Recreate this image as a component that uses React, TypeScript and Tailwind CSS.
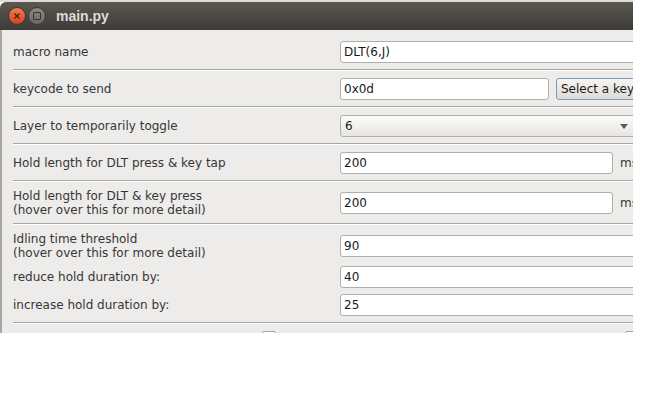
const font = "font-['DejaVu_Sans',sans-serif] text-[12px] text-[#363636]";

function Field({ value, w }: { value: string; w: string }) {
  return (
    <div
      className={`${w} h-[22px] shrink-0 rounded-[3px] border border-[#b2afaa] bg-white pl-[3px] flex items-center text-[#1a1a1a]`}
    >
      {value}
    </div>
  );
}

function Sep() {
  return <div className="ml-[11px] h-px bg-[#a8a6a1] border-b border-white box-content" />;
}

function Row({ label, children, h = "h-[22px]", className = "" }: { label: React.ReactNode; children: React.ReactNode; h?: string; className?: string }) {
  return (
    <div className={`flex items-center ${h} ${className}`}>
      <div className="w-[338px] shrink-0 pl-[11px] leading-[14px]">{label}</div>
      <div className="flex items-center gap-[7px]">{children}</div>
    </div>
  );
}

export default function App() {
  return (
    <div className="w-[662px] h-[400px] bg-white relative overflow-hidden">
      <div className={`w-[633px] h-[333px] flex flex-col overflow-hidden ${font}`}>
        <div className="h-[2px] bg-[#dedcd8] shrink-0" />
        <div className="h-[28px] shrink-0 flex items-center bg-gradient-to-b from-[#5b5852] to-[#3c3b37] rounded-tl-[6px]">
          <div className="ml-[8px] w-[18px] h-[18px] rounded-full bg-gradient-to-b from-[#f37a4e] to-[#d9411c] border border-[#3a3936] flex items-center justify-center">
            <svg width="8" height="8" viewBox="0 0 8 8">
              <path d="M1.5 1.5 L6.5 6.5 M6.5 1.5 L1.5 6.5" stroke="#4a2316" strokeWidth="1.4" />
            </svg>
          </div>
          <div className="ml-[2px] w-[18px] h-[18px] rounded-full bg-gradient-to-b from-[#8a8883] to-[#6a6964] border border-[#3a3936] flex items-center justify-center">
            <div className="w-[8px] h-[8px] border border-[#35342f] rounded-[1px]" />
          </div>
          <span className="ml-[10px] font-['Liberation_Sans',sans-serif] font-bold text-[14px] text-[#dfdbd2]">main.py</span>
        </div>
        <div className="flex-1 flex bg-[#edecea]">
          <div className="w-[2px] bg-[#a9a7a3] shrink-0" />
          <div className="flex-1 flex flex-col pt-[11px]">
            <Row label="macro name">
              <Field value="DLT(6,J)" w="w-[320px]" />
            </Row>
            <div className="mt-[6px]"><Sep /></div>
            <Row label="keycode to send" className="mt-[7px]">
              <Field value="0x0d" w="w-[209px]" />
              <div className="h-[22px] w-[100px] shrink-0 rounded-[3px] border border-[#7a9cc0] bg-gradient-to-b from-[#f6f5f3] to-[#dedbd6] pl-[4px] flex items-center text-[#1a1a1a]">
                Select a key
              </div>
            </Row>
            <div className="mt-[6px]"><Sep /></div>
            <Row label="Layer to temporarily toggle" className="mt-[7px]">
              <div className="w-[320px] h-[22px] shrink-0 rounded-[3px] border border-[#b2afaa] bg-gradient-to-b from-[#fbfbfa] to-[#e7e5e2] pl-[4px] flex items-center text-[#1a1a1a]">
                <span className="flex-1">6</span>
                <svg width="8" height="5" viewBox="0 0 8 5" className="mr-[31px]">
                  <path d="M0 0 H8 L4 5 Z" fill="#5a5a5a" />
                </svg>
              </div>
            </Row>
            <div className="mt-[6px]"><Sep /></div>
            <Row label="Hold length for DLT press & key tap" className="mt-[7px]">
              <Field value="200" w="w-[273px]" />
              <span>ms</span>
            </Row>
            <div className="mt-[6px]"><Sep /></div>
            <Row
              label={<>Hold length for DLT &amp; key press<br />(hover over this for more detail)</>}
              h="h-[28px]"
              className="mt-[7px]"
            >
              <Field value="200" w="w-[273px]" />
              <span>ms</span>
            </Row>
            <div className="mt-[6px]"><Sep /></div>
            <Row
              label={<>Idling time threshold<br />(hover over this for more detail)</>}
              h="h-[28px]"
              className="mt-[7px]"
            >
              <Field value="90" w="w-[320px]" />
            </Row>
            <Row label="reduce hold duration by:" className="mt-[6px]">
              <Field value="40" w="w-[320px]" />
            </Row>
            <Row label="increase hold duration by:" className="mt-[6px]">
              <Field value="25" w="w-[320px]" />
            </Row>
            <div className="mt-[6px]"><Sep /></div>
            <div className="relative flex-1">
              <div className="absolute left-[260px] top-[7px] w-[14px] h-[14px] border border-[#a5a29d] rounded-[2px] bg-white" />
              <div className="absolute left-[623px] top-[7px] w-[14px] h-[14px] border border-[#a5a29d] rounded-[2px] bg-white" />
            </div>
          </div>
        </div>
      </div>
    </div>
  );
}
